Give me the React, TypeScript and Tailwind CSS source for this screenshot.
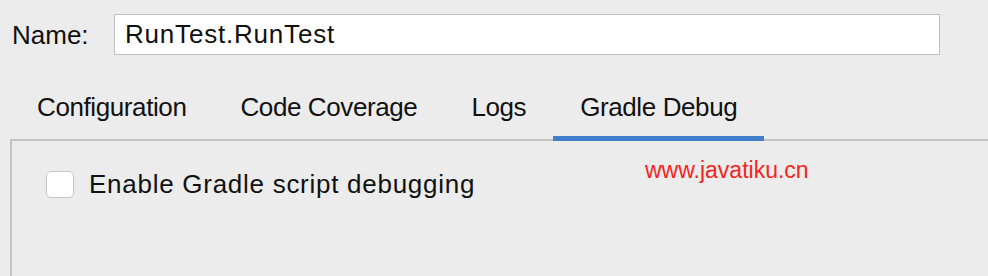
import { useState } from "react";

const tabs = ["Configuration", "Code Coverage", "Logs", "Gradle Debug"];

export default function App() {
  const [active, setActive] = useState("Gradle Debug");
  const [name, setName] = useState("RunTest.RunTest");
  const [enabled, setEnabled] = useState(false);

  return (
    <div
      className="relative h-[276px] w-[988px] overflow-hidden bg-[#ececec] text-[#111111]"
      style={{ fontFamily: '"Liberation Sans", Arial, sans-serif' }}
    >
      <div className="flex items-center pt-[14px]">
        <label className="w-[114px] shrink-0 pl-[12px] text-[26px] leading-[30px]">
          Name:
        </label>
        <input
          className="h-[41px] w-[826px] border border-[#c2c2c2] bg-white pl-[10px] text-[26px] tracking-[0.8px] outline-none"
          value={name}
          onChange={(e) => setName(e.target.value)}
          type="text"
        />
      </div>

      <div className="relative z-10 ml-[10px] mt-[37px] flex">
        {tabs.map((tab) => {
          const isActive = tab === active;
          return (
            <button
              key={tab}
              type="button"
              onClick={() => setActive(tab)}
              className="flex flex-col"
            >
              <span className="px-[27px] text-[26px] leading-[30px] tracking-[-0.4px]">
                {tab}
              </span>
              <span
                className={
                  isActive
                    ? "mt-[14px] h-[5px] w-full bg-[#3f7fca]"
                    : "mt-[14px] h-[5px] w-full"
                }
              />
            </button>
          );
        })}
      </div>

      <section className="-mt-[2px] ml-[10px] h-[200px] w-[990px] border-l-2 border-t-2 border-[#c3c3c3] pl-[34px] pt-[28px]">
        <label className="flex items-center gap-[15px]">
          <input
            type="checkbox"
            checked={enabled}
            onChange={(e) => setEnabled(e.target.checked)}
            className="h-[27px] w-[28px] appearance-none rounded-[5px] border border-[#c6c6c6] bg-white"
          />
          <span className="text-[26px] leading-[30px] tracking-[0.73px]">
            Enable Gradle script debugging
          </span>
        </label>
      </section>

      <div className="absolute left-[645px] top-[159px] text-[23px] leading-[23px] text-[#f2261f]">
        www.javatiku.cn
      </div>
    </div>
  );
}
